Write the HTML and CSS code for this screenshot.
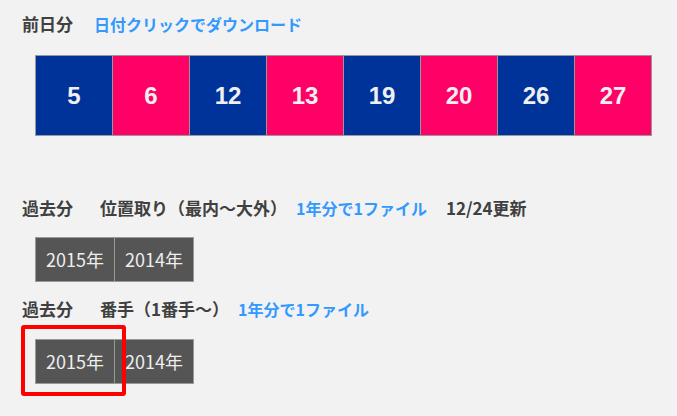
FILE: index.html
```html
<!DOCTYPE html>
<html lang="ja">
<head>
<meta charset="utf-8">
<title>ダウンロード</title>
<link rel="stylesheet" href="styles.css">
</head>
<body>
<div class="page">
  <div class="title title-first">
    <span class="label">前日分</span>
    <a class="link link-wide" href="#">日付クリックでダウンロード</a>
  </div>
  <div class="days">
    <a class="day blue" href="#">5</a>
    <a class="day pink" href="#">6</a>
    <a class="day blue" href="#">12</a>
    <a class="day pink" href="#">13</a>
    <a class="day blue" href="#">19</a>
    <a class="day pink" href="#">20</a>
    <a class="day blue" href="#">26</a>
    <a class="day pink" href="#">27</a>
  </div>

  <div class="title title-second">
    <span class="label label-gap">過去分</span>
    <span class="label">位置取り（最内～大外）</span>
    <span class="link">1年分で1ファイル</span>
    <span class="label updated">12/24更新</span>
  </div>
  <div class="years years-first">
    <a class="year" href="#">2015年</a>
    <a class="year" href="#">2014年</a>
  </div>

  <div class="title title-third">
    <span class="label label-gap">過去分</span>
    <span class="label">番手（1番手～）</span>
    <span class="link">1年分で1ファイル</span>
  </div>
  <div class="years years-second">
    <a class="year" href="#">2015年</a>
    <a class="year" href="#">2014年</a>
    <span class="highlight"></span>
  </div>
</div>
</body>
</html>
```

FILE: styles.css
```css
html, body {
  margin: 0;
  padding: 0;
  background: #f2f2f2;
}

body {
  font-family: "Noto Sans CJK JP", "Noto Sans", sans-serif;
  color: #444444;
  min-height: 416px;
}

.page {
  padding: 0 22px 40px;
}

.title {
  display: flex;
  align-items: center;
  height: 24px;
  line-height: 24px;
  white-space: nowrap;
}

.title-first {
  padding-top: 12px;
}

.title-second {
  margin-top: 60px;
}

.title-third {
  margin-top: 15px;
}

.label {
  font-size: 17px;
  font-weight: 700;
  color: #404040;
}

.label-gap {
  margin-right: 27px;
}

.link {
  font-size: 16px;
  font-weight: 700;
  color: #3399ff;
  text-decoration: none;
  margin-left: 9px;
}

.link-wide {
  margin-left: 21px;
}

.updated {
  margin-left: 19px;
}

.days {
  display: flex;
  width: max-content;
  margin: 19px 0 0 13px;
  border: 1px solid #999999;
}

.day {
  width: 76px;
  height: 79px;
  display: flex;
  align-items: center;
  justify-content: center;
  font-family: "Liberation Sans", Arial, sans-serif;
  font-weight: 700;
  font-size: 24px;
  color: #f0f0f0;
  text-decoration: none;
}

.day + .day {
  border-left: 1px solid #999999;
}

.blue {
  background: #003399;
}

.pink {
  background: #ff0066;
}

.years {
  position: relative;
  display: flex;
  width: max-content;
  margin-left: 13px;
  border: 1px solid #999999;
  background: #555555;
}

.years-first {
  margin-top: 17px;
}

.years-second {
  margin-top: 18px;
}

.year {
  display: block;
  width: 78px;
  height: 43px;
  line-height: 43px;
  text-align: center;
  font-size: 18px;
  font-weight: 400;
  color: #eeeeee;
  text-decoration: none;
}

.year + .year {
  border-left: 1px solid #999999;
}

.highlight {
  position: absolute;
  left: -15px;
  top: -15px;
  width: 105px;
  height: 71px;
  box-sizing: border-box;
  border: 4px solid #ff0000;
  border-radius: 3px;
}
```
